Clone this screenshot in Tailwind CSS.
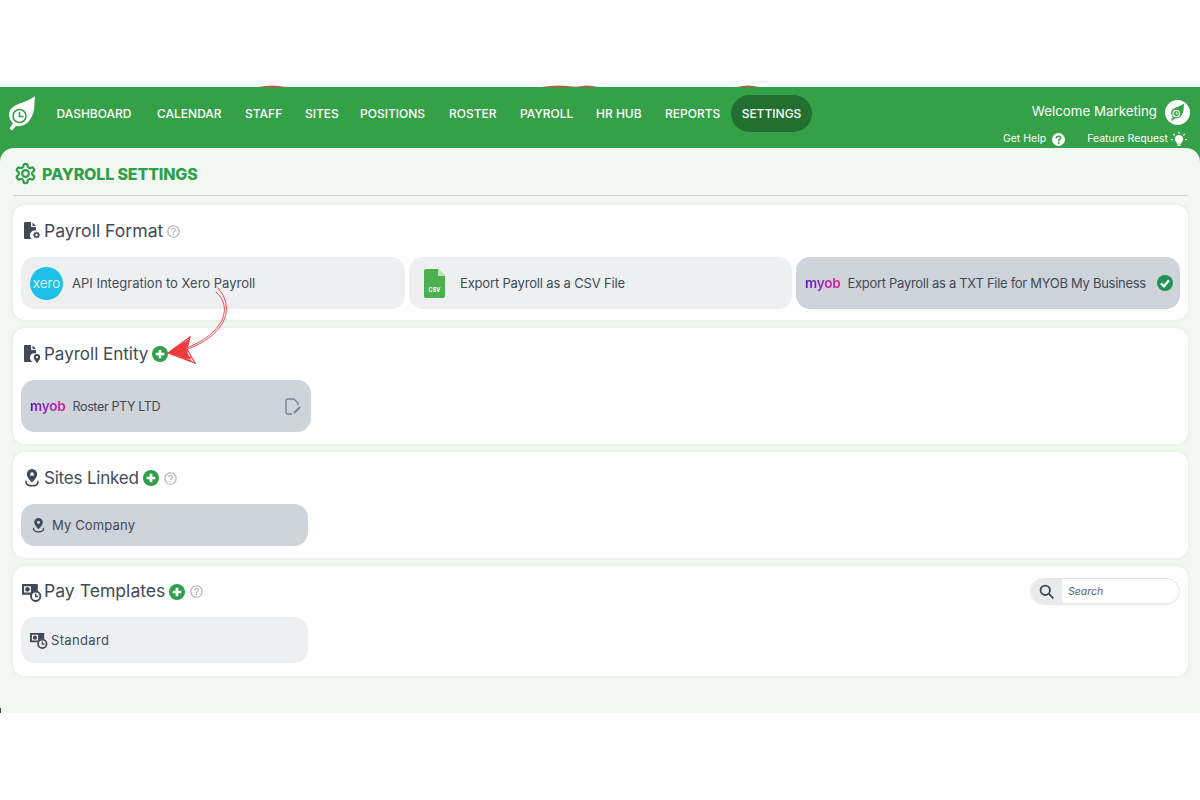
<!DOCTYPE html>
<html lang="en">
<head>
  <meta charset="UTF-8" />
  <meta name="viewport" content="width=device-width, initial-scale=1.0"/>
  <title>Payroll Settings</title>
  <script src="https://cdn.jsdelivr.net/npm/@tailwindcss/browser@4"></script>
</head>
<body class="bg-white font-['Inter',sans-serif] text-[#414b57]">
  <div class="relative h-[800px] overflow-hidden pt-[87px]">
    <!-- bits of red scribble poking over the header -->
    <svg class="absolute left-[258px] top-[85px] h-[2px] w-[28px]" viewBox="0 0 28 2"><path fill="#ef4444" d="M0 2Q14 -1 28 2Z"/></svg>
    <svg class="absolute left-[541px] top-[85px] h-[2px] w-[36px]" viewBox="0 0 36 2"><path fill="#ef4444" d="M0 2Q18 -1 36 2Z"/></svg>
    <svg class="absolute left-[576px] top-[85px] h-[2px] w-[22px]" viewBox="0 0 22 2"><path fill="#ef4444" d="M0 2Q11 -1 22 2Z"/></svg>
    <svg class="absolute left-[737px] top-[85px] h-[2px] w-[22px]" viewBox="0 0 22 2"><path fill="#ef4444" d="M0 2Q11 -1 22 2Z"/></svg>

    <div class="h-[626px] bg-[#34a047]">
      <!-- Navigation -->
      <nav class="flex h-[61px] items-start text-white">
        <svg class="ml-[8px] mt-[8px] h-[38px] w-[30px] shrink-0" viewBox="0 0 30 38">
          <path fill="#fff" d="M27 1C26 8 27.500 16 23 23C20 29 14 32 8 31L4 35.500 1.500 33.500 5 28.500C0 23 0 16 4 13C9 8 20 7 27 1Z"/>
          <circle cx="11.500" cy="21" r="6.500" fill="#fff" stroke="#34a047" stroke-width="1.600"/>
          <path fill="none" stroke="#34a047" stroke-width="1.600" d="M11.500 17V21.500H15.500"/>
        </svg>
        <div class="ml-[18px] mt-[8px] flex h-[37px] items-center gap-[25px] text-[12px] font-medium whitespace-nowrap">
          <a class="w-[76px] pt-px text-center">DASHBOARD</a>
          <a class="w-[63px] pt-px text-center">CALENDAR</a>
          <a class="w-[35px] pt-px text-center">STAFF</a>
          <a class="w-[30px] pt-px text-center">SITES</a>
          <a class="w-[64px] pt-px text-center">POSITIONS</a>
          <a class="w-[46px] pt-px text-center">ROSTER</a>
          <a class="w-[51px] pt-px text-center">PAYROLL</a>
          <a class="w-[44px] pt-px text-center">HR HUB</a>
          <a class="w-[53px] pt-px text-center">REPORTS</a>
          <a class="-ml-[12px] flex h-[37px] w-[81px] items-center justify-center rounded-full bg-[#236f30] pt-px">SETTINGS</a>
        </div>
        <div class="ml-auto mr-[10px] flex flex-col items-end">
          <div class="mt-[13px] flex h-[24px] items-center gap-[8px] text-[13.3px]">
            <span>Welcome Marketing</span>
            <span class="flex h-[25px] w-[25px] items-center justify-center rounded-full bg-white">
              <svg class="h-[19px] w-[16px]" viewBox="0 0 30 38">
                <path fill="#34a047" d="M27 1C26 8 27.500 16 23 23C20 29 14 32 8 31L4 35.500 1.500 33.500 5 28.500C0 23 0 16 4 13C9 8 20 7 27 1Z"/>
                <circle cx="11.500" cy="21" r="6.500" fill="#34a047" stroke="#fff" stroke-width="2.400"/>
                <path fill="none" stroke="#fff" stroke-width="2.200" d="M11.500 17V21.500H15.500"/>
              </svg>
            </span>
          </div>
          <div class="mt-[8px] flex h-[14px] items-center text-[10.5px]">
            <span>Get Help</span>
            <svg class="ml-[6px] h-[13px] w-[13px]" viewBox="0 0 24 24"><circle cx="12" cy="12" r="12" fill="#fff"/><path fill="none" stroke="#34a047" stroke-width="3" d="M8 9.500C8 7 10 6 12 6C14.500 6 16 7.500 16 9.500C16 12 12.500 12 12.500 15"/><circle cx="12.500" cy="18.500" r="1.800" fill="#34a047"/></svg>
            <span class="ml-[22px]">Feature Request</span>
            <svg class="ml-[3px] mr-[3px] h-[16px] w-[16px]" viewBox="0 0 24 24"><path fill="#fff" d="M12 6a6 6 0 0 0-3.500 11V19h7v-2A6 6 0 0 0 12 6Z"/><rect x="9.500" y="20" width="5" height="2.500" fill="#fff"/><path stroke="#fff" stroke-width="1.800" d="M12 1V4M3.500 4.500 5.500 6.500M20.500 4.500 18.500 6.500M0 13H3M21 13H24"/></svg>
          </div>
        </div>
      </nav>

      <!-- Payroll settings -->
      <main class="h-[565px] rounded-t-[14px] bg-[#f3f8f3] pl-[13px] pr-[12px]">
        <div class="flex h-[48px] items-center gap-[5px] border-b border-[#cdd3cd] pl-px pt-[3px]">
          <svg class="h-[23px] w-[23px]" viewBox="0 0 24 24" fill="none" stroke="#2fa04a" stroke-width="2.300" stroke-linejoin="round"><path d="M12.220 2h-.44a2 2 0 0 0-2 2v.18a2 2 0 0 1-1 1.730l-.43.25a2 2 0 0 1-2 0l-.15-.08a2 2 0 0 0-2.730.73l-.22.38a2 2 0 0 0 .73 2.730l.15.1a2 2 0 0 1 1 1.720v.51a2 2 0 0 1-1 1.740l-.15.09a2 2 0 0 0-.73 2.730l.22.38a2 2 0 0 0 2.730.73l.15-.08a2 2 0 0 1 2 0l.43.25a2 2 0 0 1 1 1.730V20a2 2 0 0 0 2 2h.44a2 2 0 0 0 2-2v-.18a2 2 0 0 1 1-1.730l.43-.25a2 2 0 0 1 2 0l.15.08a2 2 0 0 0 2.730-.73l.22-.39a2 2 0 0 0-.73-2.730l-.15-.08a2 2 0 0 1-1-1.740v-.5a2 2 0 0 1 1-1.740l.15-.09a2 2 0 0 0 .73-2.730l-.22-.38a2 2 0 0 0-2.730-.73l-.15.08a2 2 0 0 1-2 0l-.43-.25a2 2 0 0 1-1-1.730V4a2 2 0 0 0-2-2z"/><circle cx="12" cy="12" r="3.500"/></svg>
          <h1 class="pt-px text-[16px] font-extrabold tracking-[-0.15px] text-[#2fa04a]">PAYROLL SETTINGS</h1>
        </div>

        <div class="mt-[9px] flex flex-col gap-[8px]">
          <!-- Payroll Format -->
          <section class="h-[115px] rounded-[12px] bg-white px-[8px] shadow-[0_0_5px_rgba(0,0,0,0.08)]">
            <div class="flex h-[52px] items-center pl-[2px]">
              <svg class="h-[18px] w-[18px]" viewBox="0 0 18 18"><path fill="#414b57" d="M2 0H8V5H13V8.500A5 5 0 0 0 8.500 17H2A1 1 0 0 1 1 16V1A1 1 0 0 1 2 0ZM9.500 .5 13 4H9.500Z"/><g transform="translate(9.200 8.700) scale(.36)" fill="none" stroke="#414b57" stroke-width="4.500"><path d="M12 3V5M12 19V21M3 12H5M19 12H21M5.600 5.600 7 7M17 17 18.400 18.400M5.600 18.400 7 17M17 7 18.400 5.600"/><circle cx="12" cy="12" r="5.500"/></g></svg>
              <h2 class="ml-[3px] pt-px text-[17.6px] font-normal">Payroll Format</h2>
              <svg class="ml-[4px] h-[13px] w-[13px]" viewBox="0 0 24 24" fill="none" stroke="#a8adb3" stroke-width="2"><circle cx="12" cy="12" r="10.500"/><path d="M8.500 9.500C8.500 7.500 10 6.500 12 6.500C14 6.500 15.500 7.700 15.500 9.500C15.500 11.800 12 12 12 14.800M12 16.500V18.500"/></svg>
            </div>
            <div class="flex gap-[4px]">
              <button class="flex h-[52px] w-[384px] items-center rounded-[14px] bg-[#eeeff1] pl-[9px] text-[13px]">
                <span class="flex h-[33px] w-[33px] items-center justify-center rounded-full bg-[#1fc0e7] text-[13.5px] font-light text-white">xero</span>
                <span class="ml-[9px] pt-px">API Integration to Xero Payroll</span>
              </button>
              <button class="flex h-[52px] w-[383px] items-center rounded-[14px] bg-[#eeeff1] pl-[15px] text-[13px]">
                <svg class="h-[29px] w-[21px]" viewBox="0 0 21 29"><path fill="#4caf50" d="M2 0H14L21 7V27A2 2 0 0 1 19 29H2A2 2 0 0 1 0 27V2A2 2 0 0 1 2 0Z"/><path fill="#b9e6b4" d="M14 0L21 7H14Z"/><text x="10.500" y="23" fill="#fff" font-size="5.500" font-weight="700" text-anchor="middle">CSV</text></svg>
                <span class="ml-[15px] pt-px tracking-[-0.17px]">Export Payroll as a CSV File</span>
              </button>
              <button class="flex h-[52px] w-[384px] items-center rounded-[14px] bg-[#cfd3da] pl-[9px] text-[13px]">
                <span class="bg-linear-to-r from-[#5b0fb8] to-[#e0109b] bg-clip-text text-[13.500px] font-semibold tracking-[-0.2px] text-transparent">myob</span>
                <span class="ml-[7px] pt-px tracking-[-0.29px]">Export Payroll as a TXT File for MYOB My Business</span>
                <svg class="ml-auto mr-[7px] h-[16px] w-[16px]" viewBox="0 0 24 24"><circle cx="12" cy="12" r="12" fill="#1f9254"/><path fill="none" stroke="#fff" stroke-width="3.500" d="M6 12.500 10.500 17 18 8"/></svg>
              </button>
            </div>
          </section>

          <!-- Payroll Entity -->
          <section class="h-[116px] rounded-[12px] bg-white px-[8px] shadow-[0_0_5px_rgba(0,0,0,0.08)]">
            <div class="flex h-[52px] items-center pl-[2px]">
              <svg class="h-[18px] w-[18px]" viewBox="0 0 18 18"><path fill="#414b57" d="M2 0H8V5H13V8.500A4.500 4.500 0 0 0 9.800 17H2A1 1 0 0 1 1 16V1A1 1 0 0 1 2 0ZM9.500 .5 13 4H9.500Z"/><path fill="#414b57" d="M14 9A3.200 3.200 0 0 0 10.800 12.200C10.800 14.500 14 18 14 18S17.200 14.500 17.200 12.200A3.200 3.200 0 0 0 14 9Z"/><circle cx="14" cy="12.200" r="1.100" fill="#fff"/></svg>
              <h2 class="ml-[3px] pt-px text-[17px] font-normal">Payroll Entity</h2>
              <svg class="ml-[4px] h-[16px] w-[16px]" viewBox="0 0 24 24"><circle cx="12" cy="12" r="12" fill="#2fa04a"/><path stroke="#fff" stroke-width="4" d="M12 5.500V18.500M5.500 12H18.500"/></svg>
            </div>
            <button class="flex h-[52px] w-[290px] items-center rounded-[14px] bg-[#cfd3da] pl-[9px] text-[12.5px]">
              <span class="bg-linear-to-r from-[#5b0fb8] to-[#e0109b] bg-clip-text text-[13.500px] font-semibold tracking-[-0.2px] text-transparent">myob</span>
              <span class="ml-[7px] pt-[2px] tracking-[-0.35px]">Roster PTY LTD</span>
              <svg class="ml-auto mr-[10px] h-[17px] w-[16px]" viewBox="0 0 16 17" fill="none" stroke="#7c838c" stroke-width="1.400"><path d="M7 16H2.500A1.500 1.500 0 0 1 1 14.500V2.500A1.500 1.500 0 0 1 2.500 1H9L13 5V7"/><path stroke-width="2" d="M9 15 15 9"/></svg>
            </button>
          </section>

          <!-- Sites Linked -->
          <section class="h-[106px] rounded-[12px] bg-white px-[8px] shadow-[0_0_5px_rgba(0,0,0,0.08)]">
            <div class="flex h-[52px] items-center pl-[2px]">
              <svg class="h-[18px] w-[18px]" viewBox="0 0 18 18"><path fill="#414b57" fill-rule="evenodd" d="M9 0A5.200 5.200 0 0 0 3.800 5.200C3.800 8.500 9 13.500 9 13.500S14.200 8.500 14.200 5.200A5.200 5.200 0 0 0 9 0ZM9 3.300A1.900 1.900 0 1 1 9 7.100 1.900 1.900 0 0 1 9 3.300Z"/><path fill="none" stroke="#414b57" stroke-width="1.600" d="M3.500 12C2.500 12.500 2.500 16.800 9 16.800S15.500 12.500 14.500 12"/></svg>
              <h2 class="ml-[3px] pt-px text-[17px] font-normal tracking-[-0.2px]">Sites Linked</h2>
              <svg class="ml-[4px] h-[16px] w-[16px]" viewBox="0 0 24 24"><circle cx="12" cy="12" r="12" fill="#2fa04a"/><path stroke="#fff" stroke-width="4" d="M12 5.500V18.500M5.500 12H18.500"/></svg>
              <svg class="ml-[5px] h-[13px] w-[13px]" viewBox="0 0 24 24" fill="none" stroke="#a8adb3" stroke-width="2"><circle cx="12" cy="12" r="10.500"/><path d="M8.500 9.500C8.500 7.500 10 6.500 12 6.500C14 6.500 15.500 7.700 15.500 9.500C15.500 11.800 12 12 12 14.800M12 16.500V18.500"/></svg>
            </div>
            <button class="flex h-[42px] w-[287px] items-center rounded-[14px] bg-[#cfd3da] pl-[10px] text-[13px]">
              <svg class="h-[15px] w-[15px]" viewBox="0 0 18 18"><path fill="#414b57" fill-rule="evenodd" d="M9 0A5.200 5.200 0 0 0 3.800 5.200C3.800 8.500 9 13.500 9 13.500S14.200 8.500 14.200 5.200A5.200 5.200 0 0 0 9 0ZM9 3.300A1.900 1.900 0 1 1 9 7.100 1.900 1.900 0 0 1 9 3.300Z"/><path fill="none" stroke="#414b57" stroke-width="1.600" d="M3.500 12C2.500 12.500 2.500 16.800 9 16.800S15.500 12.500 14.500 12"/></svg>
              <span class="ml-[6px] pt-px tracking-[0.15px]">My Company</span>
            </button>
          </section>

          <!-- Pay Templates -->
          <section class="h-[110px] rounded-[12px] bg-white px-[8px] shadow-[0_0_5px_rgba(0,0,0,0.08)]">
            <div class="flex h-[51px] items-center pl-[1px]">
              <svg class="h-[20px] w-[20px]" viewBox="0 0 19 19"><path fill="#414b57" fill-rule="evenodd" d="M0 2H15V8.500A5.500 5.500 0 0 0 8.500 12H0ZM2 4V10H8.500V4Z"/><circle cx="5.200" cy="7" r="2.200" fill="#414b57"/><circle cx="13" cy="13.500" r="4.500" fill="#fff" stroke="#414b57" stroke-width="1.800"/><path fill="none" stroke="#414b57" stroke-width="1.300" d="M13 11V13.800H15.500"/></svg>
              <h2 class="ml-[2px] text-[17.6px] font-normal">Pay Templates</h2>
              <svg class="ml-[4px] h-[16px] w-[16px]" viewBox="0 0 24 24"><circle cx="12" cy="12" r="12" fill="#2fa04a"/><path stroke="#fff" stroke-width="4" d="M12 5.500V18.500M5.500 12H18.500"/></svg>
              <svg class="ml-[5px] h-[13px] w-[13px]" viewBox="0 0 24 24" fill="none" stroke="#a8adb3" stroke-width="2"><circle cx="12" cy="12" r="10.500"/><path d="M8.500 9.500C8.500 7.500 10 6.500 12 6.500C14 6.500 15.500 7.700 15.500 9.500C15.500 11.800 12 12 12 14.800M12 16.500V18.500"/></svg>
              <div class="ml-auto flex h-[27px] w-[150px] overflow-hidden rounded-full border border-[#e4e5e7] bg-white shadow-[inset_0_-1px_2px_rgba(0,0,0,0.08)]">
                <span class="flex w-[31px] items-center justify-center bg-[#e9eaec]">
                  <svg class="h-[15px] w-[15px]" viewBox="0 0 24 24" fill="none" stroke="#414b57" stroke-width="3"><circle cx="10" cy="10" r="7.500"/><path d="M15.500 15.500 23 23"/></svg>
                </span>
                <span class="ml-[6px] self-center text-[10.5px] italic text-[#565f69]">Search</span>
              </div>
            </div>
            <button class="flex h-[46px] w-[287px] items-center rounded-[14px] bg-[#eeeff1] pl-[9px] text-[13px]">
              <svg class="h-[18px] w-[18px]" viewBox="0 0 19 19"><path fill="#414b57" fill-rule="evenodd" d="M0 2H15V8.500A5.500 5.500 0 0 0 8.500 12H0ZM2 4V10H8.500V4Z"/><circle cx="5.200" cy="7" r="2.200" fill="#414b57"/><circle cx="13" cy="13.500" r="4.500" fill="#eeeff1" stroke="#414b57" stroke-width="1.800"/><path fill="none" stroke="#414b57" stroke-width="1.300" d="M13 11V13.800H15.500"/></svg>
              <span class="ml-[3px] pt-px tracking-[0.35px]">Standard</span>
            </button>
          </section>
        </div>
      </main>
    </div>

    <!-- dark nick at the bottom-left corner of the page -->
    <div class="absolute left-0 top-[708px] h-[5px] w-px bg-[#444]"></div>

    <!-- red arrow annotation over the page -->
    <svg class="absolute left-[160px] top-[285px] h-[85px] w-[75px]" viewBox="160 285 75 85" fill="none" stroke="#f0383c" stroke-linecap="round">
      <path stroke-width="0.900" d="M218 288C226 297 229 308 224 320C218 333 204 345 176 353"/>
      <path stroke-width="0.900" d="M216 292C224 299 227 309 222 320C216 332 203 343 176 352"/>
      <path stroke-width="1.200" d="M168 353 190 337 187 349 195 363 168 353 188 343 186 358 172 352 192 358M170 352 189 340M171 354 191 361"/>
      <path fill="#f0383c" stroke="none" d="M168 353 188 341 186 350 191 360Z"/>
    </svg>
  </div>
</body>
</html>
